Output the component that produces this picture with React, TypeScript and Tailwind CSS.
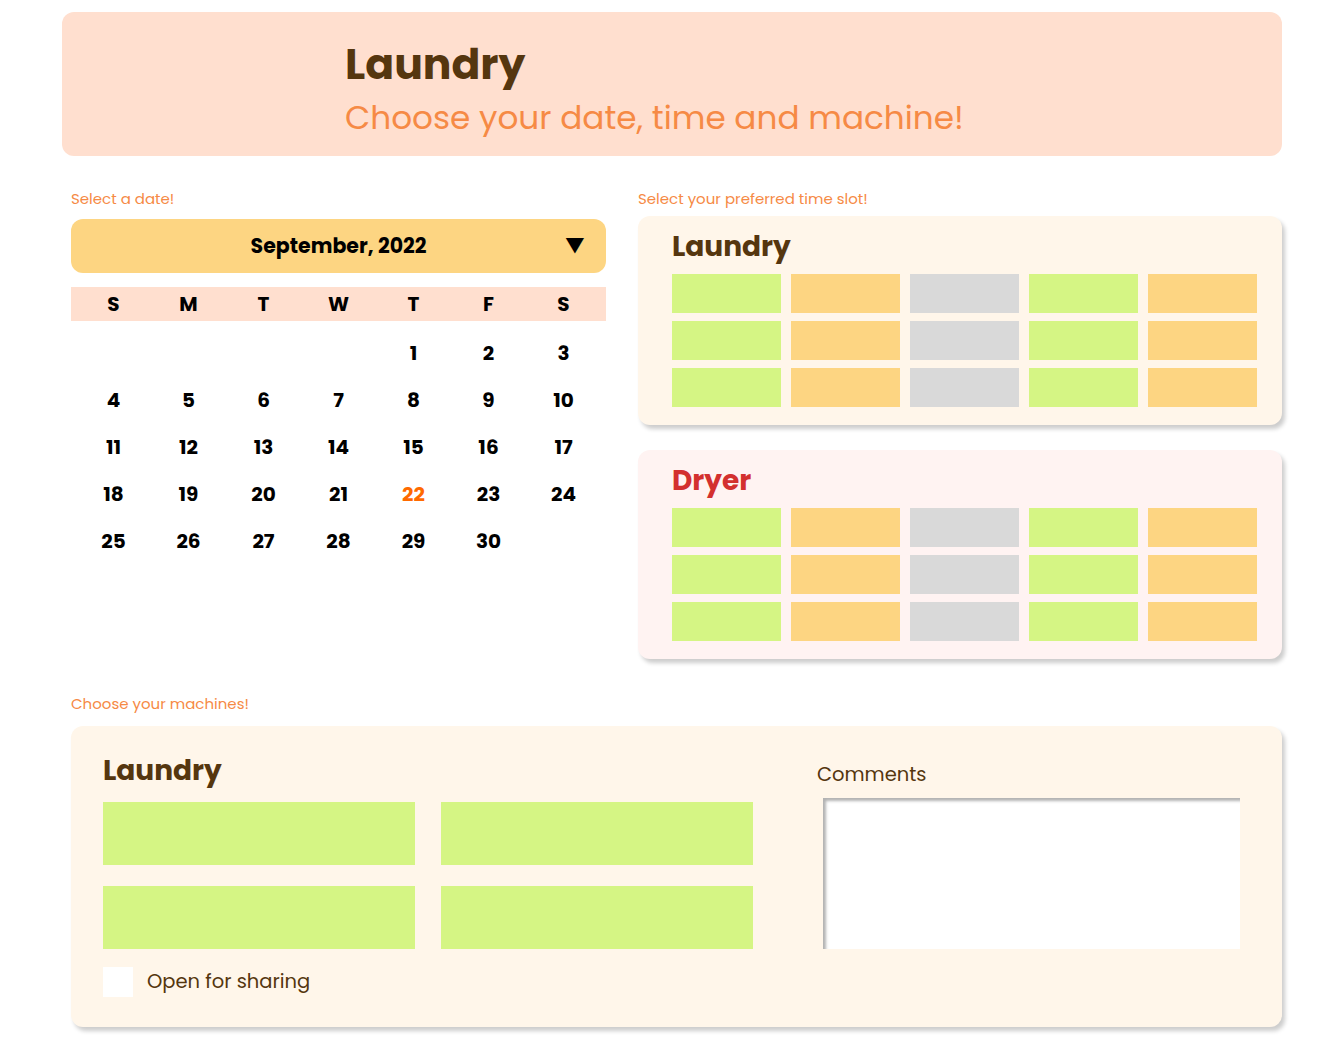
import { useState } from 'react';

const brown = 'text-[#55360f]';

const slotColors = ['bg-[#d5f584]', 'bg-[#fdd582]', 'bg-[#d9d9d9]', 'bg-[#d5f584]', 'bg-[#fdd582]'];

function SlotCard({ title, titleClass, bg }: { title: string; titleClass: string; bg: string }) {
  return (
    <div className={`${bg} rounded-xl shadow-[3px_4px_4px_rgba(0,0,0,0.2)] pl-[34px] pr-[25px] pt-[14px] pb-[18px]`}>
      <h2 className={`text-[28px] font-bold leading-[34px] mb-[10px] ${titleClass}`}>{title}</h2>
      <div className="grid grid-cols-5 gap-x-[10px] gap-y-[8px]">
        {[0, 1, 2].map((r) =>
          slotColors.map((c, i) => <div key={`${r}-${i}`} className={`${c} h-[39px]`} />)
        )}
      </div>
    </div>
  );
}

export default function App() {
  const [day, setDay] = useState(22);
  const days: (number | null)[] = [null, null, null, null];
  for (let i = 1; i <= 30; i++) days.push(i);

  return (
    <div className="w-[1343px] pt-[12px] pb-[30px] font-['Poppins','Inter',sans-serif]">
      <header className="ml-[62px] w-[1220px] h-[144px] rounded-xl bg-[#ffdfcf] pl-[283px] pt-[27px]">
        <h1 className={`text-[42.5px] font-bold leading-[50px] ${brown}`}>Laundry</h1>
        <p className="text-[32.7px] leading-[58px] text-[#f68a45]">Choose your date, time and machine!</p>
      </header>

      <div className="ml-[71px] w-[1211px] flex gap-[32px] mt-[32px]">
        <section className="w-[535px]">
          <p className="text-[15px] leading-[22px] text-[#f68a45] mb-[9px]">Select a date!</p>
          <div className="h-[54px] rounded-xl bg-[#fdd582] flex items-center justify-center relative">
            <span className="text-[20.5px] font-bold text-black">September, 2022</span>
            <span className="absolute right-[21px] top-[15px] text-[20px] leading-[24px] text-black">▼</span>
          </div>
          <div className="mt-[14px] h-[34px] bg-[#ffdfcf] grid grid-cols-7 px-[5px] items-center">
            {['S', 'M', 'T', 'W', 'T', 'F', 'S'].map((d, i) => (
              <span key={i} className="text-center text-[20px] font-bold text-black">{d}</span>
            ))}
          </div>
          <div className="grid grid-cols-7 px-[5px] mt-[8px]">
            {days.map((d, i) => (
              <button
                key={i}
                onClick={() => d && setDay(d)}
                className={`h-[47px] text-center text-[20px] font-bold ${d === day ? 'text-[#ff6a00]' : 'text-black'}`}
              >
                {d ?? ''}
              </button>
            ))}
          </div>
        </section>

        <section className="flex-1">
          <p className="text-[15px] leading-[22px] text-[#f68a45] mb-[6px]">Select your preferred time slot!</p>
          <SlotCard title="Laundry" titleClass={brown} bg="bg-[#fff6ea]" />
          <div className="h-[25px]" />
          <SlotCard title="Dryer" titleClass="text-[#d3302f]" bg="bg-[#fff3f2]" />
        </section>
      </div>

      <div className="ml-[71px] w-[1211px] mt-[34px]">
        <p className="text-[15px] leading-[22px] text-[#f68a45] mb-[11px]">Choose your machines!</p>
        <div className="rounded-xl bg-[#fff6ea] shadow-[3px_4px_4px_rgba(0,0,0,0.2)] flex pl-[32px] pr-[42px] pt-[28px] pb-[30px]">
          <div className="w-[650px]">
            <h2 className={`text-[28px] font-bold leading-[34px] mb-[14px] ${brown}`}>Laundry</h2>
            <div className="grid grid-cols-2 gap-x-[26px] gap-y-[21px]">
              {[0, 1, 2, 3].map((i) => (
                <div key={i} className="h-[63px] bg-[#d5f584]" />
              ))}
            </div>
            <label className="flex items-center gap-[14px] mt-[18px]">
              <span className="w-[30px] h-[30px] bg-white" />
              <span className={`text-[19.5px] ${brown}`}>Open for sharing</span>
            </label>
          </div>
          <div className="ml-[64px] flex-1 pt-[9px]">
            <p className={`text-[19.5px] leading-[24px] ${brown}`}>Comments</p>
            <textarea className="block mt-[11px] ml-[6px] w-[417px] h-[151px] bg-white resize-none outline-none shadow-[inset_3px_3px_3px_rgba(0,0,0,0.3)]" />
          </div>
        </div>
      </div>
    </div>
  );
}
